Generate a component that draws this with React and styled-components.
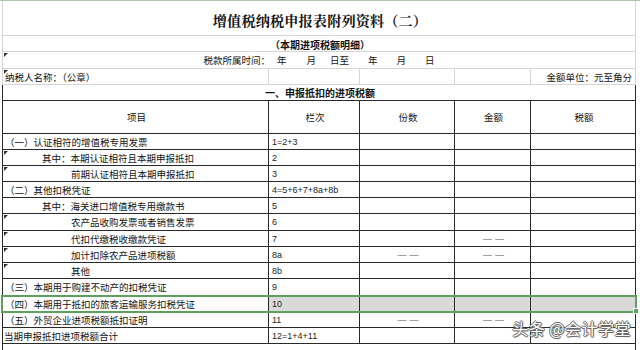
import styled, { createGlobalStyle, css } from "styled-components";

const GlobalStyle = createGlobalStyle`
  html, body {
    margin: 0;
    padding: 0;
    background: #ffffff;
  }
`;

const INK = "#2a2a2a";
const GRID = "#d6d6d6";
const COLS = "266px 91px 95px 76px 105px";
const FONT = `"Noto Sans CJK SC", "Noto Sans", sans-serif`;

const Sheet = styled.div`
  position: relative;
  width: 640px;
  height: 350px;
  overflow: hidden;
  background: #ffffff;
  border-top: 1px solid #a9c9a9;
  box-sizing: border-box;
  padding-left: 2px;
  font-family: ${FONT};
  font-size: 9.5px;
  color: #141414;
`;

const Row = styled.div`
  position: relative;
  display: grid;
  grid-template-columns: ${COLS};
  width: 634px;
  height: ${(p) => p.$h}px;
  box-sizing: border-box;
  border-left: 1px solid ${(p) => (p.$dark ? INK : GRID)};
  border-bottom: 1px solid ${(p) => (p.$dark ? INK : GRID)};

  ${(p) =>
    p.$mark &&
    css`
      &::before {
        content: "";
        position: absolute;
        left: 1px;
        top: 1px;
        border-top: 4px solid #333;
        border-right: 4px solid transparent;
      }
    `}

  ${(p) =>
    p.$selected &&
    css`
      outline: 2px solid #5ea15e;
      outline-offset: -1px;
      z-index: 2;

      &::after {
        content: "";
        position: absolute;
        right: -3px;
        bottom: -3px;
        width: 4px;
        height: 4px;
        background: #5ea15e;
        border: 1px solid #ffffff;
      }
    `}
`;

const Cell = styled.div`
  grid-column: span ${(p) => p.$span || 1};
  display: flex;
  align-items: center;
  justify-content: ${(p) =>
    p.$align === "center" ? "center" : p.$align === "right" ? "flex-end" : "flex-start"};
  box-sizing: border-box;
  padding: 0 ${(p) => (p.$align === "right" ? 3 : 0)}px 0 ${(p) => p.$indent ?? 2}px;
  border-right: 1px solid ${(p) => (p.$dark ? INK : GRID)};
  background: ${(p) => (p.$shade ? "#d9d9d9" : "transparent")};
  white-space: nowrap;
  overflow: hidden;
  font-weight: ${(p) => (p.$bold ? 700 : 400)};
`;

const Title = styled.span`
  font-family: "Noto Serif CJK SC", ${FONT};
  font-size: 14.2px;
  font-weight: 700;
  padding-top: 3px;
  letter-spacing: 0.1px;
`;

const Heading = styled.span`
  font-size: 10px;
  font-weight: 700;
  padding-top: ${(p) => p.$lift || 0}px;
`;

const DateBit = styled.span`
  margin-left: ${(p) => p.$gap || 0}px;
`;

const Num = styled.span`
  font-family: "Liberation Sans", Arial, sans-serif;
  font-size: 9px;
  color: #1e1e1e;
`;

const Dash = styled.span`
  color: #555;
  font-family: "Liberation Sans", Arial, sans-serif;
  font-size: 9px;
  letter-spacing: 3px;
  margin-left: 3px;
`;

const Watermark = styled.div`
  position: absolute;
  right: 9px;
  top: 315px;
  z-index: 5;
  font-family: ${FONT};
  font-size: 16px;
  color: #ffffff;
  letter-spacing: 0.5px;
  text-shadow:
    1px 0 0 #6a6a6a,
    -1px 0 0 #6a6a6a,
    0 1px 0 #6a6a6a,
    0 -1px 0 #6a6a6a,
    1px 1px 1px #888;
`;

const rows = [
  { item: "（一）认证相符的增值税专用发票", indent: 2, no: "1=2+3" },
  { item: "其中：本期认证相符且本期申报抵扣", indent: 39, no: "2", mark: true },
  { item: "前期认证相符且本期申报抵扣", indent: 68, no: "3", mark: true },
  { item: "（二）其他扣税凭证", indent: 2, no: "4=5+6+7+8a+8b" },
  { item: "其中：海关进口增值税专用缴款书", indent: 39, no: "5" },
  { item: "农产品收购发票或者销售发票", indent: 68, no: "6", mark: true },
  { item: "代扣代缴税收缴款凭证", indent: 68, no: "7", mark: true, amount: true },
  { item: "加计扣除农产品进项税额", indent: 68, no: "8a", mark: true, count: true, amount: true },
  { item: "其他", indent: 68, no: "8b", mark: true },
  { item: "（三）本期用于购建不动产的扣税凭证", indent: 2, no: "9" },
  { item: "（四）本期用于抵扣的旅客运输服务扣税凭证", indent: 2, no: "10", selected: true },
  { item: "（五）外贸企业进项税额抵扣证明", indent: 2, no: "11", count: true, amount: true },
  { item: "当期申报抵扣进项税额合计", indent: 1, no: "12=1+4+11" },
];

const heights = [16, 16, 16, 16, 16, 17, 16, 16, 16, 17, 16, 16, 16];

function App() {
  return (
    <>
      <GlobalStyle />
      <Sheet>
        <Row $h={35}>
          <Cell $span={5} $align="center">
            <Title>增值税纳税申报表附列资料（二）</Title>
          </Cell>
        </Row>
        <Row $h={16}>
          <Cell $span={5} $align="center">
            <Heading $lift={1}>（本期进项税额明细）</Heading>
          </Cell>
        </Row>
        <Row $h={17} $mark>
          <Cell $span={5} $align="center" $indent={0}>
            <DateBit>税款所属时间：</DateBit>
            <DateBit $gap={7}>年</DateBit>
            <DateBit $gap={20}>月</DateBit>
            <DateBit $gap={14}>日至</DateBit>
            <DateBit $gap={19}>年</DateBit>
            <DateBit $gap={19}>月</DateBit>
            <DateBit $gap={19}>日</DateBit>
          </Cell>
        </Row>
        <Row $h={16} $mark>
          <Cell>纳税人名称：（公章）</Cell>
          <Cell />
          <Cell />
          <Cell />
          <Cell $align="right">金额单位：元至角分</Cell>
        </Row>
        <Row $h={16} $dark>
          <Cell $span={5} $align="center" $dark>
            <Heading>一、申报抵扣的进项税额</Heading>
          </Cell>
        </Row>
        <Row $h={33} $dark>
          <Cell $align="center" $dark>项目</Cell>
          <Cell $align="center" $dark>栏次</Cell>
          <Cell $align="center" $dark>份数</Cell>
          <Cell $align="center" $dark>金额</Cell>
          <Cell $align="center" $dark>税额</Cell>
        </Row>
        {rows.map((r, i) => (
          <Row key={r.no} $h={heights[i]} $dark $mark={r.mark} $selected={r.selected}>
            <Cell $dark $indent={r.indent}>{r.item}</Cell>
            <Cell $dark $indent={3} $shade={r.selected}>
              <Num>{r.no}</Num>
            </Cell>
            <Cell $dark $align="center" $shade={r.selected}>
              {r.count && <Dash>——</Dash>}
            </Cell>
            <Cell $dark $align="center" $shade={r.selected}>
              {r.amount && <Dash>——</Dash>}
            </Cell>
            <Cell $dark $shade={r.selected} />
          </Row>
        ))}
        <Row $h={22} $dark>
          <Cell $span={5} $align="center" $dark>
            <Heading $lift={6}>二、进项税额转出额</Heading>
          </Cell>
        </Row>
        <Watermark>头条 @会计学堂</Watermark>
      </Sheet>
    </>
  );
}

export default App;
